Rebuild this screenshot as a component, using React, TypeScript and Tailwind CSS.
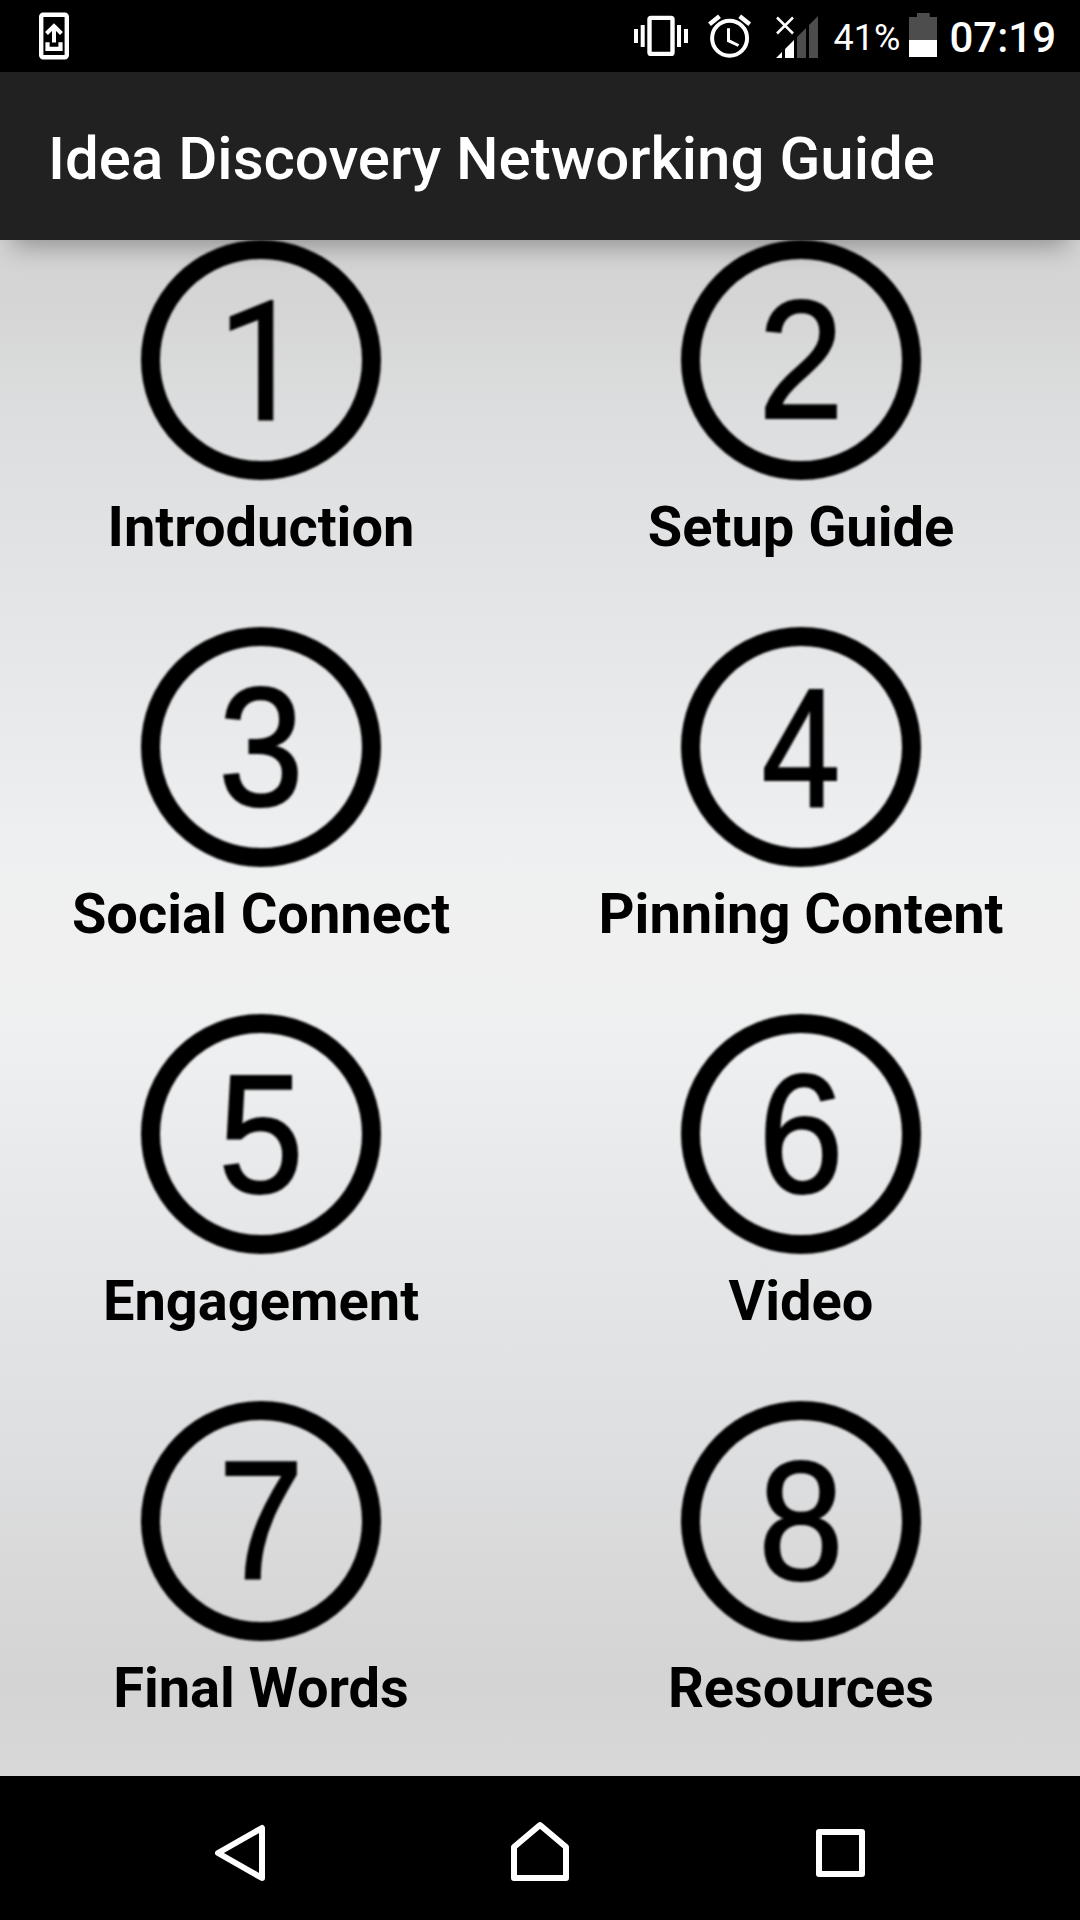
import React from 'react';

interface Chapter {
  number: string;
  title: string;
}

const chapters: Chapter[] = [
  { number: '1', title: 'Introduction' },
  { number: '2', title: 'Setup Guide' },
  { number: '3', title: 'Social Connect' },
  { number: '4', title: 'Pinning Content' },
  { number: '5', title: 'Engagement' },
  { number: '6', title: 'Video' },
  { number: '7', title: 'Final Words' },
  { number: '8', title: 'Resources' }
];

const StatusBar: React.FC = () => (
  <div className="flex h-[72px] items-center bg-black text-white">
    <svg className="ml-[39px] h-[48px] w-[30px] shrink-0" viewBox="0 0 30 48" fill="none" stroke="white">
      <rect x="2.200" y="2.700" width="25.600" height="42.600" rx="2" strokeWidth="4.400" />
      <path d="M15 30.500V14M7.500 21.500L15 14l7.500 7.500" strokeWidth="4" />
      <path d="M8.500 30.300v6.600h13v-6.600" strokeWidth="4.200" />
    </svg>
    <svg className="mr-[10px] ml-auto h-[72px] w-[190px] shrink-0" viewBox="0 0 190 72" fill="none">
      {/* vibrate */}
      <rect x="15.500" y="17.900" width="23" height="36" rx="1.500" stroke="white" strokeWidth="4.400" />
      <path d="M2 29v14M8.700 25v22M45 25v22M52 29v14" stroke="white" strokeWidth="4" />
      {/* alarm */}
      <circle cx="95.600" cy="38.300" r="17.500" stroke="white" strokeWidth="4" />
      <path d="M75.500 24.200l10-8M115.700 24.200l-10-8" stroke="white" strokeWidth="4.500" />
      <path d="M94.500 28.300v12.400l10 4.800" stroke="white" strokeWidth="3" />
      {/* signal */}
      <path d="M175 25l9-9v42h-9zM163 37l9-9v30h-9z" fill="#4d4d4d" />
      <path d="M151 49l9-9v18h-9zM142 58l6-6v6z" fill="white" />
      <path d="M143 17.500l16 16M159 17.500l-16 16" stroke="white" strokeWidth="2.500" />
    </svg>
    <span className="mt-[3px] text-[36px]">41%</span>
    <svg className="mr-[12px] ml-[9px] h-[72px] w-[28px] shrink-0" viewBox="0 0 28 72">
      <path d="M0 17h8v-4h12.700v4H28v23H0z" fill="#4d4d4d" />
      <path d="M0 40h28v17H0z" fill="white" />
    </svg>
    <span className="mt-[3px] mr-[24px] text-[42px] font-medium">07:19</span>
  </div>
);

const ChapterIcon: React.FC<{ number: string }> = ({ number }) => (
  <svg className="h-[240px] w-[240px] blur-[0.8px]" viewBox="0 0 240 240">
    <circle cx="120" cy="120" r="110.500" fill="none" stroke="black" strokeWidth="19" />
    {number === '1' ? (
      <text
        textAnchor="middle"
        fontSize="167"
        transform="translate(120 179.500) scale(0.94 1)"
        stroke="black"
        className="font-[Roboto,sans-serif]"
      >
        {number}
      </text>
    ) : (
      <text
        textAnchor="middle"
        fontSize="168"
        transform={number === '4' ? 'translate(120 179) scale(0.84 1)' : 'translate(120 178) scale(0.91 1)'}
        stroke="black"
        strokeWidth="2.200"
        className="font-['Liberation_Sans',sans-serif]"
      >
        {number}
      </text>
    )}
  </svg>
);

const NavigationBar: React.FC = () => (
  <nav className="flex h-[144px] gap-[240px] bg-black pt-[44px] pl-[210px]">
    <svg className="h-[64px] w-[60px]" viewBox="0 0 60 64" fill="none" stroke="white" strokeWidth="6" strokeLinejoin="round">
      <path d="M8 33L52 8v50z" />
    </svg>
    <svg className="h-[64px] w-[60px]" viewBox="0 0 60 64" fill="none" stroke="white" strokeWidth="6" strokeLinejoin="round">
      <path d="M4 27L30 5l26 22v31H4z" />
    </svg>
    <svg className="h-[64px] w-[60px]" viewBox="0 0 60 64" fill="none" stroke="white" strokeWidth="6" strokeLinejoin="round">
      <rect x="9" y="12" width="43" height="42" />
    </svg>
  </nav>
);

const App: React.FC = () => (
  <div className="flex h-[1920px] w-[1080px] flex-col bg-black font-[Roboto,sans-serif]">
    <StatusBar />
    <header className="relative z-10 flex h-[168px] items-center bg-[#212121] pt-[6px] pl-[48px] shadow-[0_18px_24px_-12px_rgba(0,0,0,0.32)]">
      <h1 className="text-[60px] font-medium text-white">Idea Discovery Networking Guide</h1>
    </header>
    <main className="grid h-[1536px] grid-cols-2 content-start bg-[linear-gradient(#d4d4d4_0%,#d5d5d5_4%,#dadbdb_9%,#dddee0_12%,#e1e2e4_19%,#e8e9eb_30%,#eeeff1_39%,#eff0f0_42%,#f0f0f0_46%,#eff0f0_50%,#eeeff1_53%,#e8e9eb_61%,#e1e2e4_73%,#dddee0_80%,#d9d9d9_86%,#d4d4d4_94%,#d8d8d8_100%)] pr-[18px] [column-gap:18px]">
      {chapters.map((chapter) => (
        <div key={chapter.number} className="flex h-[387px] flex-col items-center">
          <ChapterIcon number={chapter.number} />
          <span className="mt-[14px] text-[56px] leading-[66px] font-bold">{chapter.title}</span>
        </div>
      ))}
    </main>
    <NavigationBar />
  </div>
);

export default App;
